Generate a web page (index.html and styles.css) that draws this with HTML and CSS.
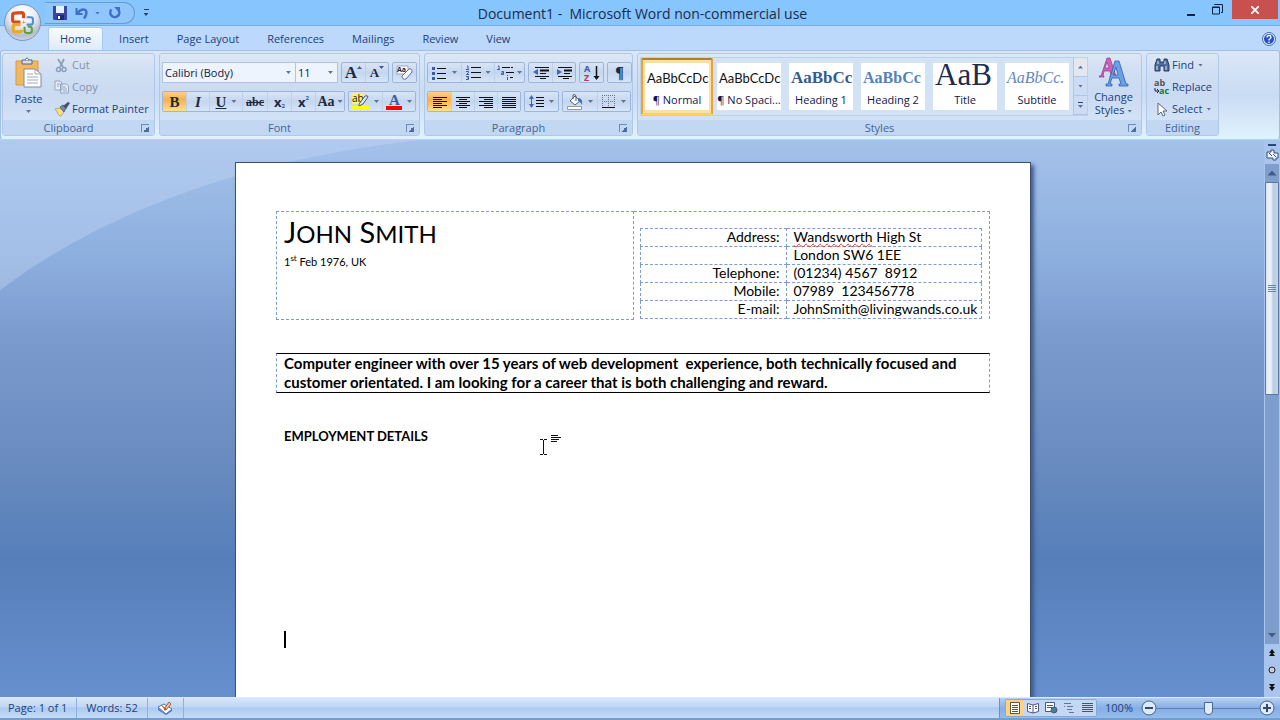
FILE: index.html
```html
<!DOCTYPE html>
<html lang="en">
<head>
<meta charset="utf-8">
<title>Document1 - Microsoft Word non-commercial use</title>
<link rel="stylesheet" href="styles.css">
</head>
<body>
<div class="app">
  <header class="titlebar">
    <button class="orb" aria-label="Office Button">
      <svg viewBox="0 0 24 24" width="25" height="25" fill="none" stroke-width="3">
        <path d="M10 11.500H4.500Q2.500 11.500 2.500 9.500V5Q2.500 3 4.500 3L11 2.500Q13 2.500 13 4.500V8" stroke="#d9491a"/>
        <path d="M16 7h4q2 0 2 2v3q0 2-2 2h-4" stroke="#4a8fd8" stroke-width="2"/>
        <path d="M10 14H5q-2 0-2 2v3q0 2 2 2h4q2 0 2-2" stroke="#f2a81c"/>
        <path d="M14 16v4q0 2 2 2h3q2 0 2-2v-2q0-2-2-2h-2" stroke="#5fa33a" stroke-width="2"/>
        <path d="M13 10v3M12 12h3" stroke="#e9a23a" stroke-width="1"/>
      </svg>
    </button>
    <div class="quick">
      <button aria-label="Save"><svg width="14" height="14" viewBox="0 0 14 14"><path d="M0 0h14v14H1L0 13z" fill="#3a45a0"/><path d="M3 0h8v7H3z" fill="#e8f0fb"/><path d="M4 9h7v5H4z" fill="#222a68"/><path d="M5 10h2v3H5z" fill="#fff"/></svg></button>
      <button class="undo" aria-label="Undo"><svg width="14" height="13" viewBox="0 0 14 13"><path d="M1.500 1v6h6" fill="none" stroke="#3f6fca" stroke-width="2"/><path d="M2.500 6q4-5 8-3 2.500 3-1.500 8.500" fill="none" stroke="#3f6fca" stroke-width="2.500"/></svg></button>
      <i class="caret"></i>
      <button class="redo" aria-label="Repeat"><svg width="14" height="14" viewBox="0 0 14 14" fill="none"><path d="M3.500 3.500A4.500 4.500 0 1 0 10.500 4" stroke="#3f6fca" stroke-width="2.500"/><path d="M6 1h6v6z" fill="#3f6fca"/></svg></button>
    </div>
    <button class="qat-more" aria-label="Customize Quick Access Toolbar"><i class="bar"></i><i class="caret"></i></button>
    <h1>Document1 -&nbsp; Microsoft Word non-commercial use</h1>
    <div class="window">
      <button aria-label="Minimize"><svg width="10" height="12"><path d="M1 10h8v2H1z" fill="#10223c"/></svg></button>
      <button aria-label="Restore"><svg width="11" height="11" fill="none" stroke="#10223c"><path d="M.5 3h7v7h-7zM0 3.500h8" stroke-width="1"/><path d="M2.500 1V.5h8v8H9"/></svg></button>
      <button class="close" aria-label="Close"><svg width="8" height="8"><path d="M0 0l8 8M8 0L0 8" stroke="#fff" stroke-width="1.800"/></svg></button>
    </div>
  </header>

  <nav class="tabs">
    <button class="active">Home</button><button>Insert</button><button>Page Layout</button><button>References</button><button>Mailings</button><button>Review</button><button>View</button>
    <button class="help" aria-label="Help"><svg width="14" height="14" viewBox="0 0 14 14"><circle cx="7" cy="7" r="6.500" fill="#dfeafb" stroke="#4a6bb0"/><circle cx="7" cy="7" r="5" fill="#2450c8"/><path d="M5 5.500q0-2 2-2t2 1.700Q9 6.500 7 7.500v1M7 9.500V11" fill="none" stroke="#fff" stroke-width="1.300"/></svg></button>
  </nav>

  <section class="ribbon">
    <section class="group clipboard">
      <div class="body">
        <button class="big"><svg width="28" height="31" viewBox="0 0 28 31"><path d="M1 4h22v24H1z" fill="#f0b860" stroke="#d79a40"/><path d="M7 3h10v4H7z" fill="#d8dde4" stroke="#59677a"/><path d="M10 3q2-4 4 0" fill="#fff" stroke="#59677a"/><path d="M9 12h11l6 5v13H9z" fill="#fff" stroke="#7c8cab"/><path d="M20 12v5h6M12 17h6M12 20h11M12 23h11M12 26h11" fill="none" stroke="#9caac4"/></svg><span>Paste</span><i class="caret"></i></button>
        <div class="stack">
          <button class="off"><svg width="16" height="15" viewBox="0 0 16 15" fill="none" stroke="#8e9eb8"><path d="M4 1l5 8M10 1L6 9" stroke-width="1.800"/><circle cx="4.500" cy="11.500" r="2" stroke-width="1.500"/><circle cx="10" cy="11.500" r="2" stroke-width="1.500"/></svg>Cut</button>
          <button class="off"><svg width="16" height="14" viewBox="0 0 16 14" fill="#e6edf8" stroke="#93a5c2"><path d="M1 1h5l2 2v7H1zM6.500 4h6l2 2v7h-8z"/><path d="M3 4h3M3 6h2M9 7h3M9 9h4M9 11h4"/></svg>Copy</button>
          <button><svg width="16" height="15" viewBox="0 0 16 15"><path d="M1 7l5-1 4 4-3 4q-2 0-3-2-1-3-3-5z" fill="#f4e08a" stroke="#a79235" stroke-width=".7"/><path d="M6 5l3-2 3 3-2 4z" fill="#7b8ca8" stroke="#38475f" stroke-width=".7"/><path d="M9 4l5-4 2 1-4 6z" fill="#4a4f6c"/></svg>Format Painter</button>
        </div>
      </div>
      <footer>Clipboard<button class="launch" aria-label="Clipboard options"></button></footer>
    </section>

    <section class="group font">
      <div class="body rows">
        <div class="row">
          <span class="pick name"><select aria-label="Font"><option>Calibri (Body)</option></select><i class="caret"></i></span><span class="pick size"><select aria-label="Font size"><option>11</option></select><i class="caret"></i></span>
          <div class="set gap"><button class="serif big-a" aria-label="Grow font">A<svg class="mark" width="5" height="3"><path d="M0 3l2.500-3L5 3z" fill="#3d5b94"/></svg></button><button class="serif small-a" aria-label="Shrink font">A<svg class="mark" width="5" height="3"><path d="M0 0l2.500 3L5 0z" fill="#3d5b94"/></svg></button></div>
          <div class="set gap"><button aria-label="Clear formatting"><svg width="17" height="17" viewBox="0 0 17 17"><path d="M1 2h11v8H1z" fill="#fff" stroke="#9aa6bd"/><text x="1" y="8" class="tiny">Aa</text><path d="M6 12l7-7q3-1 3 3l-6 7q-4 1-4-3z" fill="#f5f7fb" stroke="#62718c"/></svg></button></div>
        </div>
        <div class="row">
          <div class="set">
            <button class="serif on"><b>B</b></button><button class="serif"><em>I</em></button><button class="serif drop"><u>U</u><i class="caret"></i></button><button class="serif strike"><s>abc</s></button><button class="script">x<sub>2</sub></button><button class="script">x<sup>2</sup></button><button class="serif aa">Aa<i class="caret"></i></button>
          </div>
          <div class="set gap">
            <button class="drop" aria-label="Highlight"><svg width="17" height="16" viewBox="0 0 17 16"><path d="M0 0h11v10H0z" fill="#fff36a"/><text x="0" y="8" class="ab">ab</text><path d="M7 10l6-8q3-1 3 1l-5 7-4 2z" fill="#dce5f4" stroke="#465878"/><path d="M0 12h17v4H0z" fill="#ffff00"/></svg><i class="caret"></i></button><button class="drop" aria-label="Font color"><svg width="16" height="16" viewBox="0 0 16 16"><text x="3" y="11" class="color-a">A</text><path d="M0 12h16v4H0z" fill="#f00"/></svg><i class="caret"></i></button>
          </div>
        </div>
      </div>
      <footer>Font<button class="launch" aria-label="Font options"></button></footer>
    </section>

    <section class="group paragraph">
      <div class="body rows">
        <div class="row">
          <div class="set">
            <button class="drop" aria-label="Bullets"><svg width="15" height="14" stroke="#111"><path d="M5 2.500h9M5 7.500h9M5 12.500h9"/><path d="M0 2.500h3M0 7.500h3M0 12.500h3" stroke="#3b5aa8" stroke-width="3"/></svg><i class="caret"></i></button><button class="drop" aria-label="Numbering"><svg width="15" height="15"><path d="M5 2.500h10M5 7.500h10M5 12.500h10" stroke="#111"/><path d="M1 1h1v3M0 4.500h3M0 6.500h2.500v1L.5 9.500H3M0 11.500h2.500v3H0M1 13h1" fill="none" stroke="#3b5aa8"/></svg><i class="caret"></i></button><button class="drop tight" aria-label="Multilevel list"><svg width="18" height="15"><path d="M5 2.500h11M9 7.500h8M13 12.500h3" stroke="#111" stroke-dasharray="8 1 2 1"/><path d="M1 1h1v3M0 4.500h3M4.500 6.500h2v3h-2v-1.500h2M10.500 10v1M10.500 12v3" fill="none" stroke="#3b5aa8"/></svg><i class="caret"></i></button>
          </div>
          <div class="set gap">
            <button aria-label="Decrease indent"><svg width="16" height="13"><path d="M2 1.500h14M7 7.500h6M2 10.500h14M7 12.500h6" stroke="#111"/><path d="M7 4.500h9" stroke="#111" stroke-width="2"/><path d="M5 3v6L0 6z" fill="#4465ae"/></svg></button><button aria-label="Increase indent"><svg width="16" height="13"><path d="M2 1.500h14M8 7.500h6M2 10.500h14M7 12.500h6" stroke="#111"/><path d="M8 4.500h8" stroke="#111" stroke-width="2"/><path d="M1 3v6L6 6z" fill="#4465ae"/></svg></button>
          </div>
          <div class="set gap"><button aria-label="Sort"><svg width="16" height="16"><text x="0" y="7" class="sort-a">A</text><text x="0" y="16" class="sort-z">Z</text><path d="M12.500 1v12" stroke="#111" stroke-width="1.500"/><path d="M9.500 11h6l-3 4z" fill="#111"/></svg></button></div>
          <div class="set gap"><button class="pilcrow" aria-label="Show paragraph marks">¶</button></div>
        </div>
        <div class="row">
          <div class="set">
            <button class="on" aria-label="Align left"><svg width="14" height="12" stroke="#111"><path d="M0 1.500h14M0 3.500h9M0 5.500h14M0 7.500h9M0 9.500h14M0 11.500h9"/></svg></button><button aria-label="Center"><svg width="14" height="12" stroke="#111"><path d="M0 1.500h14M3 3.500h8M0 5.500h14M3 7.500h8M0 9.500h14M3 11.500h8"/></svg></button><button aria-label="Align right"><svg width="14" height="12" stroke="#111"><path d="M0 1.500h14M5 3.500h9M0 5.500h14M5 7.500h9M0 9.500h14M5 11.500h9"/></svg></button><button aria-label="Justify"><svg width="14" height="12" stroke="#111"><path d="M0 1.500h14M0 3.500h14M0 5.500h14M0 7.500h14M0 9.500h14M0 11.500h14"/></svg></button>
          </div>
          <div class="set gap"><button class="drop" aria-label="Line spacing"><svg width="15" height="15"><path d="M7 3.500h8M7 6.500h8M7 9.500h8M7 12.500h8" stroke="#111"/><path d="M0 5l2.500-4L5 5zM0 10l2.500 4L5 10z" fill="#4465ae"/><path d="M2.500 4v7" stroke="#4465ae"/></svg><i class="caret"></i></button></div>
          <div class="set gap"><button class="drop wide" aria-label="Shading"><svg width="16" height="16"><path d="M3 7l5-5 5 5-5 4z" fill="#f5f8fc" stroke="#53637f"/><path d="M6 5V1q2-2 3 1v5" fill="none" stroke="#53637f"/><path d="M11 4q5 0 4 7-1-3-4-4z" fill="#456caf"/><path d="M.5 12.500h14v3H.5z" fill="#fff" stroke="#999"/></svg><i class="caret"></i></button><button class="drop" aria-label="Borders"><svg width="14" height="14"><path d="M.5 0v12M6.500 0v12M12.500 0v12M0 .5h13M0 6.500h13" stroke="#69758a" stroke-dasharray="1 1"/><path d="M0 12.500h13" stroke="#111"/></svg><i class="caret"></i></button></div>
        </div>
      </div>
      <footer>Paragraph<button class="launch" aria-label="Paragraph options"></button></footer>
    </section>

    <section class="group styles">
      <div class="body">
        <div class="gallery">
          <button class="picked"><span class="sample">AaBbCcDc</span><span>¶ Normal</span></button>
          <button><span class="sample">AaBbCcDc</span><span>¶ No Spaci...</span></button>
          <button><span class="sample head1">AaBbCc</span><span>Heading 1</span></button>
          <button><span class="sample head2">AaBbCc</span><span>Heading 2</span></button>
          <button><span class="sample title">AaB</span><span>Title</span></button>
          <button><span class="sample subtitle">AaBbCc.</span><span>Subtitle</span></button>
          <div class="spin"><button class="off" aria-label="Previous styles"><i class="caret up"></i></button><button aria-label="Next styles"><i class="caret"></i></button><button aria-label="More styles"><i class="bar"></i><i class="caret"></i></button></div>
        </div>
        <button class="big change"><svg width="30" height="30" viewBox="0 0 30 30"><path d="M0 19h2L8 1h3l6 18h1v1h-7v-1h1l-1-5H5l-1 5h1v1H0zM6 11h4L8 5z" fill="#cf62b8" stroke="#93388a" stroke-width=".7"/><path d="M7 27h2l7-23h4l7 23h2v2h-9v-2h2l-2-6h-7l-2 6h2v2H7zM14 18h5l-2-8z" fill="#69a0e6" stroke="#2f62ad" stroke-width=".8"/></svg><span>Change<br>Styles <i class="caret"></i></span></button>
      </div>
      <footer>Styles<button class="launch" aria-label="Styles options"></button></footer>
    </section>

    <section class="group editing">
      <div class="body">
        <div class="stack">
          <button><svg width="16" height="14" viewBox="0 0 16 14"><path d="M3 1h3v3h4V1h3l2 6v6h-5V8H6v5H1V7z" fill="#516b9b" stroke="#263c68"/><path d="M3 8v4M12 8v4M4 3v3M11 3v3" stroke="#dde8f8"/></svg>Find <i class="caret"></i></button>
          <button><svg width="16" height="16"><text x="0" y="7" class="rep">ab</text><text x="5" y="15" class="rep green">ac</text><path d="M1 9v3h3M3 10l2 2-2 2" fill="none" stroke="#223"/></svg>Replace</button>
          <button><svg width="16" height="15"><path d="M4 1v12l3-3 2 4 2-1-2-4h4z" fill="#fff" stroke="#5a6880"/></svg>Select <i class="caret"></i></button>
        </div>
      </div>
      <footer>Editing</footer>
    </section>
  </section>

  <main class="workspace">
    <svg class="swoosh" viewBox="0 0 640 180" preserveAspectRatio="none" aria-hidden="true"><path d="M0 0H420Q160 30 0 150z" fill="#c2d8f6" opacity=".4"/></svg>
    <div class="desk">
      <article class="page">
        <table class="contact">
          <tr>
            <td class="who"><h2>J<span>OHN</span> S<span>MITH</span></h2><p>1<sup>st</sup> Feb 1976, UK</p></td>
            <td class="details">
              <table>
                <tr><th>Address:</th><td><span class="misspelt">Wandsworth</span> High St</td></tr>
                <tr><th></th><td>London SW6 1EE</td></tr>
                <tr><th>Telephone:</th><td>(01234) 4567&nbsp; 8912</td></tr>
                <tr><th>Mobile:</th><td>07989&nbsp; 123456778</td></tr>
                <tr><th>E-mail:</th><td>JohnSmith@livingwands.co.uk</td></tr>
              </table>
            </td>
          </tr>
        </table>
        <p class="summary">Computer engineer with over 15 years of web development&nbsp; experience, both technically focused and<br>customer orientated. I am looking for a career that is both challenging and reward.</p>
        <h3>EMPLOYMENT DETAILS</h3>
        <div class="insertion"></div>
        <svg class="pointer" width="20" height="18" stroke="#111" fill="none"><path d="M0 1.500h3M4 1.500h3M3.500 2v14M0 16.500h3M4 16.500h3M11-2.500h7M11-.5h10M11 1.500h8M11 3.500h6"/></svg>
      </article>
    </div>
    <aside class="scroll">
      <i class="split"></i>
      <button class="ruler" aria-label="View ruler"><svg width="13" height="12"><path d="M1 3h4V1h3v3h4v5h-2v2H7V9H1z" fill="#eef3fc" stroke="#37517f"/><path d="M3 4l3 3M7 5l3 3" stroke="#37517f"/></svg></button>
      <button class="arrow" aria-label="Scroll up"><i class="caret up"></i></button>
      <div class="track"><button class="thumb" aria-label="Scroll position"><i></i><i></i><i></i><i></i></button></div>
      <button class="arrow" aria-label="Scroll down"><i class="caret"></i></button>
      <button class="jump" aria-label="Previous page"><svg width="6" height="8"><path d="M0 4l3-4 3 4zM0 7l3-4 3 4z" fill="#111"/></svg></button>
      <button class="jump" aria-label="Browse object"><svg width="8" height="8"><circle cx="4" cy="4" r="3" fill="#c5cfdd" stroke="#222"/></svg></button>
      <button class="jump" aria-label="Next page"><svg width="6" height="8"><path d="M0 1l3 4 3-4zM0 4l3 4 3-4z" fill="#111"/></svg></button>
    </aside>
  </main>

  <footer class="status">
    <button>Page: 1 of 1</button><button>Words: 52</button><button class="proof" aria-label="Proofing"><svg width="17" height="15"><path d="M1 6l6-3 8 5-6 5z" fill="#fff" stroke="#5775ab"/><path d="M1 7v2l8 5 6-4V8l-6 5z" fill="#4f7bc4"/><path d="M4 4l5 4-2 1M7 8l5-7 2 2-5 6z" fill="#f3c79d" stroke="#a8542e"/></svg></button>
    <div class="zoombar">
      <div class="views">
        <button class="on" aria-label="Print layout"><svg width="12" height="12" fill="#fff" stroke="#5d523c"><path d="M1.500.5h9v11h-9zM3 3.500h6M3 5.500h6M3 7.500h6M3 9.500h6"/></svg></button><button aria-label="Full screen reading"><svg width="12" height="12" fill="#fff" stroke="#4a5a78"><path d="M.5 1.500L6 3l5.500-1.500v8L6 11 .5 9.500zM6 3v8M2 4.500h2M2 6.500h2M8 4.500h2M8 6.500h2"/></svg></button><button aria-label="Web layout"><svg width="13" height="12" fill="#fff" stroke="#4a5a78"><path d="M.5.500h9v9h-9zM2 3.500h6M2 5.500h5"/><circle cx="9" cy="8" r="3" fill="#3f829a"/></svg></button><button aria-label="Outline"><svg width="12" height="12" stroke="#66748e"><path d="M1 1.500h7M4 4.500h6M4 7.500h5M6 10.500h5M1 4.500h1"/></svg></button><button aria-label="Draft"><svg width="11" height="12" stroke="#4a5568"><path d="M0 1.500h11M0 3.500h11M0 5.500h11M0 7.500h11M0 9.500h11"/></svg></button>
      </div>
      <button class="percent">100%</button>
      <button class="round" aria-label="Zoom out"><svg width="16" height="16"><circle cx="8" cy="8" r="7" fill="#dce9fb" stroke="#43628f"/><path d="M4 8h8" stroke="#33496f" stroke-width="2"/></svg></button>
      <input type="range" min="0" max="100" value="50" aria-label="Zoom">
      <button class="round" aria-label="Zoom in"><svg width="16" height="16"><circle cx="8" cy="8" r="7" fill="#dce9fb" stroke="#43628f"/><path d="M4 8h8M8 4v8" stroke="#33496f" stroke-width="2"/></svg></button>
    </div>
  </footer>
</div>
</body>
</html>
```
FILE: styles.css
```css
* { box-sizing: border-box; }
body { margin: 0; }
body, button, select, input { font-family: "Open Sans", "Noto Sans", sans-serif; font-size: 11px; color: #1e3f7c; }
button { border: 0; padding: 0; margin: 0; background: none; line-height: 14px; white-space: nowrap; }
h1, h2, h3, p { margin: 0; font-weight: normal; }
svg { display: block; flex: none; }
.app { display: flex; flex-direction: column; height: 100vh; overflow: hidden; background: #c4dbf8; }
.caret { display: inline-block; flex: none; width: 5px; height: 3px; background: #5f7596; clip-path: polygon(0 0, 100% 0, 50% 100%); }
.caret.up { clip-path: polygon(50% 0, 100% 100%, 0 100%); }
.bar { display: block; width: 5px; height: 1px; background: #24426f; }

/* Title bar */
.titlebar { position: relative; flex: none; display: flex; height: 26px; background: #86c5fe; border-bottom: 1px solid #76ace6; padding-left: 45px; }
.orb { position: absolute; z-index: 2; left: 4px; top: 4px; width: 37px; height: 37px; border-radius: 50%; border: 1px solid #7f93b4; background: radial-gradient(circle at 50% 25%, #fff 10%, #e3e7ef 45%, #b4bed0 70%, #eef2f8 100%); display: grid; place-items: center; }
.quick { display: flex; align-items: center; height: 22px; margin-top: 2px; padding: 0 12px 0 8px; gap: 8px; border: 1px solid #6d9ac9; border-left: 0; border-radius: 0 12px 12px 0; background: #8fc6fb; }
.quick .caret { background: #4b77ba; }
.quick .undo + .caret { margin-left: -2px; }
.qat-more { display: flex; flex-direction: column; align-items: center; justify-content: center; gap: 3px; width: 22px; }
.qat-more .caret { background: #24426f; }
.titlebar h1 { flex: 1; text-align: center; font-size: 14px; line-height: 27px; color: #1a2c48; padding-right: 50px; }
.window { display: flex; align-items: flex-start; }
.window button { display: grid; place-items: center; width: 26px; height: 19px; }
.window .close { width: 46px; margin: 0 2px 0 2px; background: #c8504f; }

/* Tabs */
.tabs { flex: none; display: flex; align-items: flex-end; height: 24px; padding: 0 4px 0 48px; background: #bcd8fb; }
.tabs button { height: 23px; padding: 0 14px; }
.tabs .active { padding: 0 11px; margin-right: 2px; border: 1px solid #a9c9f1; border-bottom: 0; border-radius: 3px 3px 0 0; background: linear-gradient(#f8fbff, #dfeafa); }
.tabs .help { margin-left: auto; padding: 0; }

/* Ribbon */
.ribbon { flex: none; display: flex; gap: 4px; height: 90px; padding: 2px 1px 3px; background: linear-gradient(#dbe7f7, #c9dcf4 50%, #d8e9fb 80%, #dff3ff); border: 1px solid #9dbfe8; border-bottom-color: #a4d9f8; border-radius: 3px; }
.group { display: flex; flex-direction: column; border: 1px solid #b0c8e8; border-radius: 3px; background: linear-gradient(#dde7f5, #cfdef3 25%, #c9daf2 50%, #d8e7f9); }
.body { flex: 1; display: flex; min-height: 0; }
.group > footer { position: relative; height: 15px; line-height: 15px; text-align: center; color: #456596; background: #c1d7f2; padding-right: 20px; border-radius: 0 0 2px 2px; }
.group.editing > footer { padding: 0; }
.launch { position: absolute; right: 5px; top: 4px; width: 8px; height: 8px; border: 1px solid #6e8cb9; border-width: 1px 0 0 1px; }
.launch::after { content: ""; position: absolute; right: 0; bottom: 0; width: 5px; height: 5px; background: linear-gradient(135deg, transparent 40%, #4f6d9c 40%); }
.clipboard { width: 153px; }
.font { width: 261px; }
.paragraph { width: 209px; }
.styles { width: 505px; }
.editing { width: 73px; }
.big { display: flex; flex-direction: column; align-items: center; gap: 4px; width: 51px; padding-top: 3px; }
.stack { display: flex; flex-direction: column; gap: 4px; padding-top: 2px; }
.stack button { display: flex; align-items: center; gap: 2px; height: 18px; }
.stack .caret { margin-left: 2px; }
.stack .off { color: #8392ad; }
.rows { flex-direction: column; gap: 8px; padding: 8px 2px; }
.row { display: flex; height: 21px; }
.pick { position: relative; border: 1px solid #adc4e3; background: #edf4fd; }
.pick + .pick { border-left: 0; }
.pick.name { width: 137px; }
.pick.size { width: 43px; }
.pick select { appearance: none; width: 100%; height: 19px; border: 0; padding: 0 2px; background: transparent; color: #14213a; }
.pick .caret { position: absolute; right: 4px; top: 8px; pointer-events: none; }
.set { display: flex; border: 1px solid #9cb5da; border-radius: 2px; background: linear-gradient(#d9e5f6, #c5d6ef 50%, #d5e4f8); }
.gap { margin-left: 3px; }
.set button { position: relative; display: flex; align-items: center; justify-content: center; width: 23px; color: #1c2940; }
.set button + button { border-left: 1px solid #bdcfe9; }
.set .drop { width: 33px; gap: 5px; }
.set .tight { width: 30px; gap: 2px; }
.set .wide { width: 34px; }
.set .on { background: linear-gradient(#fbcf91, #f8b04c 40%, #fde08a); }
.set .serif { font-family: "Liberation Serif", serif; font-size: 15px; font-weight: bold; }
.set .strike { width: 25px; font-size: 12px; }
.set .script { width: 24px; font-size: 13px; font-weight: bold; }
.script sub, .script sup { font-size: 6px; color: #35589a; line-height: 6px; }
.script sub { margin-top: 8px; }
.script sup { margin-bottom: 8px; }
.set .aa { width: 29px; font-size: 14px; gap: 3px; }
.set .big-a { font-size: 17px; line-height: 18px; }
.set .small-a { font-size: 13px; line-height: 18px; }
.mark { align-self: flex-start; margin-top: 3px; }
.set .pilcrow { font-size: 16px; line-height: 18px; font-weight: bold; font-family: "Liberation Serif", serif; }
.tiny { font: bold 7px "Open Sans", sans-serif; fill: #223; }
.ab { font: 10px "Open Sans", sans-serif; fill: #111; }
.color-a { font: bold 15px "Liberation Serif", serif; fill: #3c5c9d; }
.sort-a, .sort-z { font: bold 9px "Open Sans", sans-serif; fill: #38599f; }
.sort-z { fill: #b33654; }
.rep { font: bold 9px "Open Sans", sans-serif; fill: #555; }
.rep.green { fill: #197b25; }

/* Style gallery */
.styles .body { padding: 3px 0 4px 2px; }
.gallery { display: flex; border: 1px solid #bdd0eb; background: #d4e2f6; }
.gallery > button { display: flex; flex-direction: column; width: 72px; padding: 5px 4px; overflow: hidden; color: #10164e; font-size: 11px; }
.gallery > button > span { width: 64px; height: 18px; background: #fff; line-height: 16px; text-align: center; }
.gallery .sample { flex: 1; width: 64px; overflow: hidden; line-height: 30px; padding: 0 2px; font-family: Lato, sans-serif; font-size: 13px; color: #111; text-align: left; }
.gallery > .picked { border: 2px solid #efa22e; border-top-color: #b47c32; border-bottom-color: #ffd34f; padding: 3px 2px; background: #fbdfa5; border-radius: 2px; }
.gallery .head1, .gallery .head2 { font-family: "Liberation Serif", serif; font-weight: bold; font-size: 17px; color: #345c91; }
.gallery .head2 { font-size: 16px; color: #5682bb; }
.gallery .title { font-family: "Liberation Serif", serif; font-size: 31px; line-height: 24px; color: #1c2c50; }
.gallery .subtitle { font-family: "Liberation Serif", serif; font-size: 16px; font-style: italic; color: #6189bd; }
.spin { display: flex; flex-direction: column; width: 14px; border-left: 1px solid #b0c6e5; }
.spin button { flex: 1; display: flex; flex-direction: column; align-items: center; justify-content: center; gap: 2px; border-bottom: 1px solid #b0c6e5; background: #cbdcf4; }
.spin .off { background: #e3e8ef; }
.big.change { gap: 3px; padding: 0; }
.change .caret { vertical-align: middle; }
.big.change span { line-height: 13px; }
.editing .stack { padding-left: 7px; }

/* Document area */
.workspace { position: relative; flex: 1; display: flex; min-height: 0; background: linear-gradient(#a4c1ea, #8eb0df 20%, #7b9bce 35%, #6c8dc1 55%, #567fb9 75%, #668fce); }
.swoosh { position: absolute; left: 0; top: 0; width: 50%; height: 180px; }
.desk { position: relative; flex: 1; display: flex; justify-content: center; padding: 22px 0 0 2px; overflow: hidden; }
.page { position: relative; width: 796px; padding: 48px 40px; background: #fff; border: 1px solid #3e4f70; border-bottom: 0; box-shadow: 3px 3px 4px #3d5b8b; font-family: Lato, sans-serif; font-size: 14px; color: #000; }
.page table { border-collapse: collapse; width: 100%; }
.page td, .page th { padding: 0; font-weight: normal; vertical-align: top; }
.contact { border: 1px dashed #7d9dcc; border-bottom: 0; }
.page .who { width: 50%; height: 106px; padding: 2px 7px; border: 1px dashed #7d9dcc; }
.page .details { padding: 16px 7px 0 6px; }
.who h2 { font-size: 29px; line-height: 36px; }
.who h2 span { font-size: 24px; }
.who p { font-size: 11px; line-height: 19px; }
.who sup { font-size: 8px; line-height: 8px; }
.details th, .details td { height: 18px; border: 1px dashed #7d9dcc; line-height: 16px; white-space: nowrap; }
.page .details th { width: 146px; text-align: right; padding-right: 6px; }
.page .details table td { padding-left: 7px; }
.misspelt { text-decoration: underline wavy #d33; text-decoration-thickness: 1px; text-underline-offset: 1px; text-decoration-skip-ink: none; }
.summary { margin-top: 33px; padding: 0 7px; border: 1px dashed #7d9dcc; border-top: 1px solid #000; border-bottom: 1px solid #000; font-size: 15px; line-height: 19px; font-weight: bold; white-space: nowrap; }
.page h3 { margin: 33px 8px 0; font-size: 13px; line-height: 20px; font-weight: bold; }
.insertion { width: 2px; height: 17px; margin: 185px 0 0 8px; background: #000; }
.pointer { position: absolute; left: 304px; top: 275px; overflow: visible; }

/* Scroll bar */
.scroll { position: relative; display: flex; flex-direction: column; align-items: stretch; width: 16px; padding: 4px 1px 2px; background: #a9c5ee; }
.split { height: 2px; margin: 0 3px; background: #2b477d; }
.ruler { height: 18px; display: grid; place-items: center; }
.arrow { height: 18px; display: grid; place-items: center; background: #7f9fca; }
.arrow .caret { width: 9px; height: 5px; background: #3e5c8d; }
.track { flex: 1; min-height: 0; background: #7e9fce; }
.thumb { display: flex; flex-direction: column; align-items: center; justify-content: center; gap: 1px; width: 14px; height: 48%; border: 1px solid #5b74a5; border-radius: 1px; background: linear-gradient(90deg, #dce8f4, #eef4fa 40%, #b9cce2 60%, #c4d5e8); }
.thumb i { width: 8px; height: 1px; background: #6c83a5; }
.jump { height: 17px; display: grid; place-items: center; }

/* Status bar */
.status { flex: none; display: flex; height: 23px; border-top: 1px solid #dcebff; border-bottom: 2px solid #719dd1; background: linear-gradient(#d8e7fb, #bdd5f5 45%, #abc9f0 50%, #c6dcf7); }
.status > button { padding: 0 9px; border-right: 1px solid #8fb0dc; }
.status > button:first-child { padding-left: 8px; }
.zoombar { flex: none; display: flex; align-items: center; margin-left: auto; padding: 0 5px; border-left: 1px solid #6b90c6; background: linear-gradient(#b4d0f5, #86aee4 50%, #96bdec); }
.views { display: flex; height: 18px; border: 1px solid #87a8d4; border-radius: 2px; background: #c4d8f3; }
.views button { display: grid; place-items: center; width: 18px; }
.views .on { background: #fbd382; }
.percent { width: 44px; text-align: center; }
.round { width: 16px; }
input[type="range"] { appearance: none; width: 102px; height: 18px; margin: 0; background: linear-gradient(#5d7fb2, #5d7fb2) center / 100% 1px no-repeat; }
input[type="range"]::-webkit-slider-thumb { appearance: none; width: 9px; height: 13px; border: 1px solid #4b6890; background: #e0ebf9; border-radius: 1px 1px 5px 5px; }
```
